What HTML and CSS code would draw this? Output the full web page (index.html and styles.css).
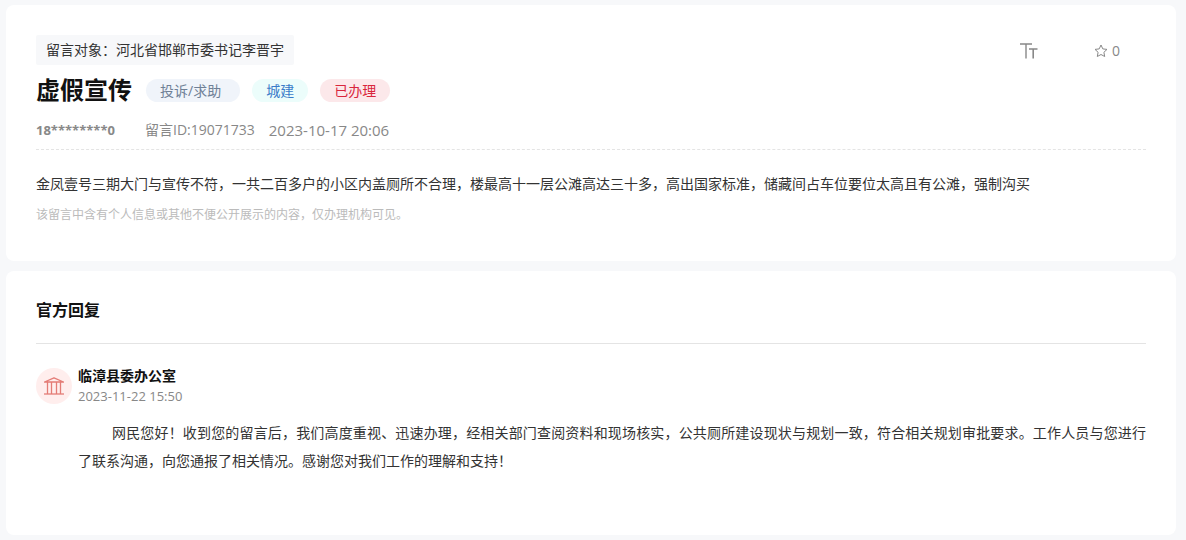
FILE: index.html
```html
<!DOCTYPE html>
<html lang="zh-CN">

<head>
    <meta charset="UTF-8">
    <meta name="viewport" content="width=device-width, initial-scale=1.0">
    <title>虚假宣传</title>
    <link rel="stylesheet" href="styles.css">
</head>

<body>
    <main>
        <section class="card message">
            <div class="top-bar">
                <p class="target">留言对象：河北省邯郸市委书记李晋宇</p>
                <div class="tools">
                    <button class="btn-font" type="button" aria-label="字号">
                        <svg width="18" height="16" viewBox="0 0 18 16" fill="none" stroke="currentColor">
                            <path d="M0 1h12M6 1v14.500" stroke-width="1.4" />
                            <path d="M9 6h8.500M13.200 6v9.500" stroke-width="1.6" />
                        </svg>
                    </button>
                    <button class="btn-star" type="button">
                        <svg width="14" height="14" viewBox="0 0 14 14" fill="none" stroke="currentColor" stroke-linejoin="round">
                            <path d="M7 1l1.8 3.9 4.2.5-3.1 2.9.8 4.2L7 10.500l-3.700 2 .8-4.200L1 5.400l4.200-.5z" />
                        </svg>
                        <span>0</span>
                    </button>
                </div>
            </div>
            <div class="title-row">
                <h1>虚假宣传</h1>
                <span class="tag tag-type">投诉/求助</span>
                <span class="tag tag-field">城建</span>
                <span class="tag tag-state">已办理</span>
            </div>
            <div class="meta">
                <b>18********0</b>
                <span>留言ID:19071733</span>
                <time>2023-10-17 20:06</time>
            </div>
            <p class="content">金凤壹号三期大门与宣传不符，一共二百多户的小区内盖厕所不合理，楼最高十一层公滩高达三十多，高出国家标准，储藏间占车位要位太高且有公滩，强制沟买</p>
            <p class="note">该留言中含有个人信息或其他不便公开展示的内容，仅办理机构可见。</p>
        </section>

        <section class="card reply">
            <h2>官方回复</h2>
            <div class="reply-item">
                <div class="avatar">
                    <svg width="20" height="18" viewBox="0 0 20 18" fill="none" stroke="currentColor" stroke-width="1.3" stroke-linejoin="round">
                        <path d="M.5 5L10 .8 19.500 5z" />
                        <path d="M3.500 5v12M7.500 5v12M12.500 5v12M16.500 5v12" />
                        <path d="M0 17h20" />
                    </svg>
                </div>
                <div class="reply-body">
                    <h3>临漳县委办公室</h3>
                    <time>2023-11-22 15:50</time>
                    <p>网民您好！收到您的留言后，我们高度重视、迅速办理，经相关部门查阅资料和现场核实，公共厕所建设现状与规划一致，符合相关规划审批要求。工作人员与您进行了联系沟通，向您通报了相关情况。感谢您对我们工作的理解和支持！</p>
                </div>
            </div>
        </section>
    </main>
</body>

</html>
```
FILE: styles.css
```css
* {
    margin: 0;
    padding: 0;
    box-sizing: border-box;
}

body {
    background-color: #f7f8fa;
    color: #333;
    font-family: "Open Sans", "Noto Sans CJK SC", sans-serif;
    font-size: 14px;
}

main {
    display: flex;
    flex-direction: column;
    gap: 10px;
    padding: 5px 10px 5px 6px;
}

.card {
    background-color: #fff;
    border-radius: 8px;
    padding: 30px;
}

.top-bar {
    display: flex;
    justify-content: space-between;
    align-items: center;
}

.target {
    background-color: #f7f8fa;
    border-radius: 2px;
    padding: 0 10px;
    line-height: 30px;
}

.tools {
    display: flex;
    gap: 56px;
    padding: 2px 26px 0 0;
}

.tools button {
    display: flex;
    align-items: center;
    gap: 4px;
    border: none;
    background: none;
    color: #888;
    font: inherit;
    line-height: 20px;
    cursor: pointer;
}

.title-row {
    display: flex;
    align-items: center;
    gap: 12px;
    height: 50px;
}

h1 {
    color: #111;
    font-size: 24px;
    line-height: 50px;
    margin-right: 2px;
}

.tag {
    border-radius: 12px;
    padding: 0 14px;
    line-height: 23px;
}

.tag-type {
    padding-right: 19px;
    background-color: #f0f4fa;
    color: #6f8096;
}

.tag-field {
    background-color: #ecfdfb;
    color: #3b7cc9;
}

.tag-state {
    background-color: #fce8ea;
    color: #d9263c;
}

.meta {
    display: flex;
    border-bottom: 1px dashed #e4e4e4;
    padding-bottom: 4px;
    color: #888;
    line-height: 30px;
}

.meta b {
    margin-right: 30px;
    font-size: 13px;
}

.meta span {
    margin-right: 14px;
}

.meta time {
    font-size: 15px;
}

.content {
    margin-top: 19px;
    line-height: 30px;
}

.note {
    color: #bbb;
    font-size: 12px;
    line-height: 32px;
}

.reply {
    padding: 24px 30px 60px;
}

h2 {
    border-bottom: 1px solid #e4e4e4;
    padding-bottom: 18px;
    color: #111;
    font-size: 16px;
    line-height: 30px;
}

.reply-item {
    display: flex;
    gap: 6px;
    margin-top: 22px;
}

.avatar {
    display: flex;
    flex: none;
    align-items: center;
    justify-content: center;
    width: 36px;
    height: 36px;
    margin-top: 2px;
    border-radius: 50%;
    background-color: #ffeeed;
    color: #e47c76;
}

h3 {
    color: #111;
    font-size: 14px;
    line-height: 20px;
}

.reply-body time {
    display: block;
    color: #888;
    font-size: 13px;
    line-height: 20px;
}

.reply-body p {
    margin-top: 13px;
    line-height: 28px;
    text-align: justify;
    text-indent: 34px;
}
```
